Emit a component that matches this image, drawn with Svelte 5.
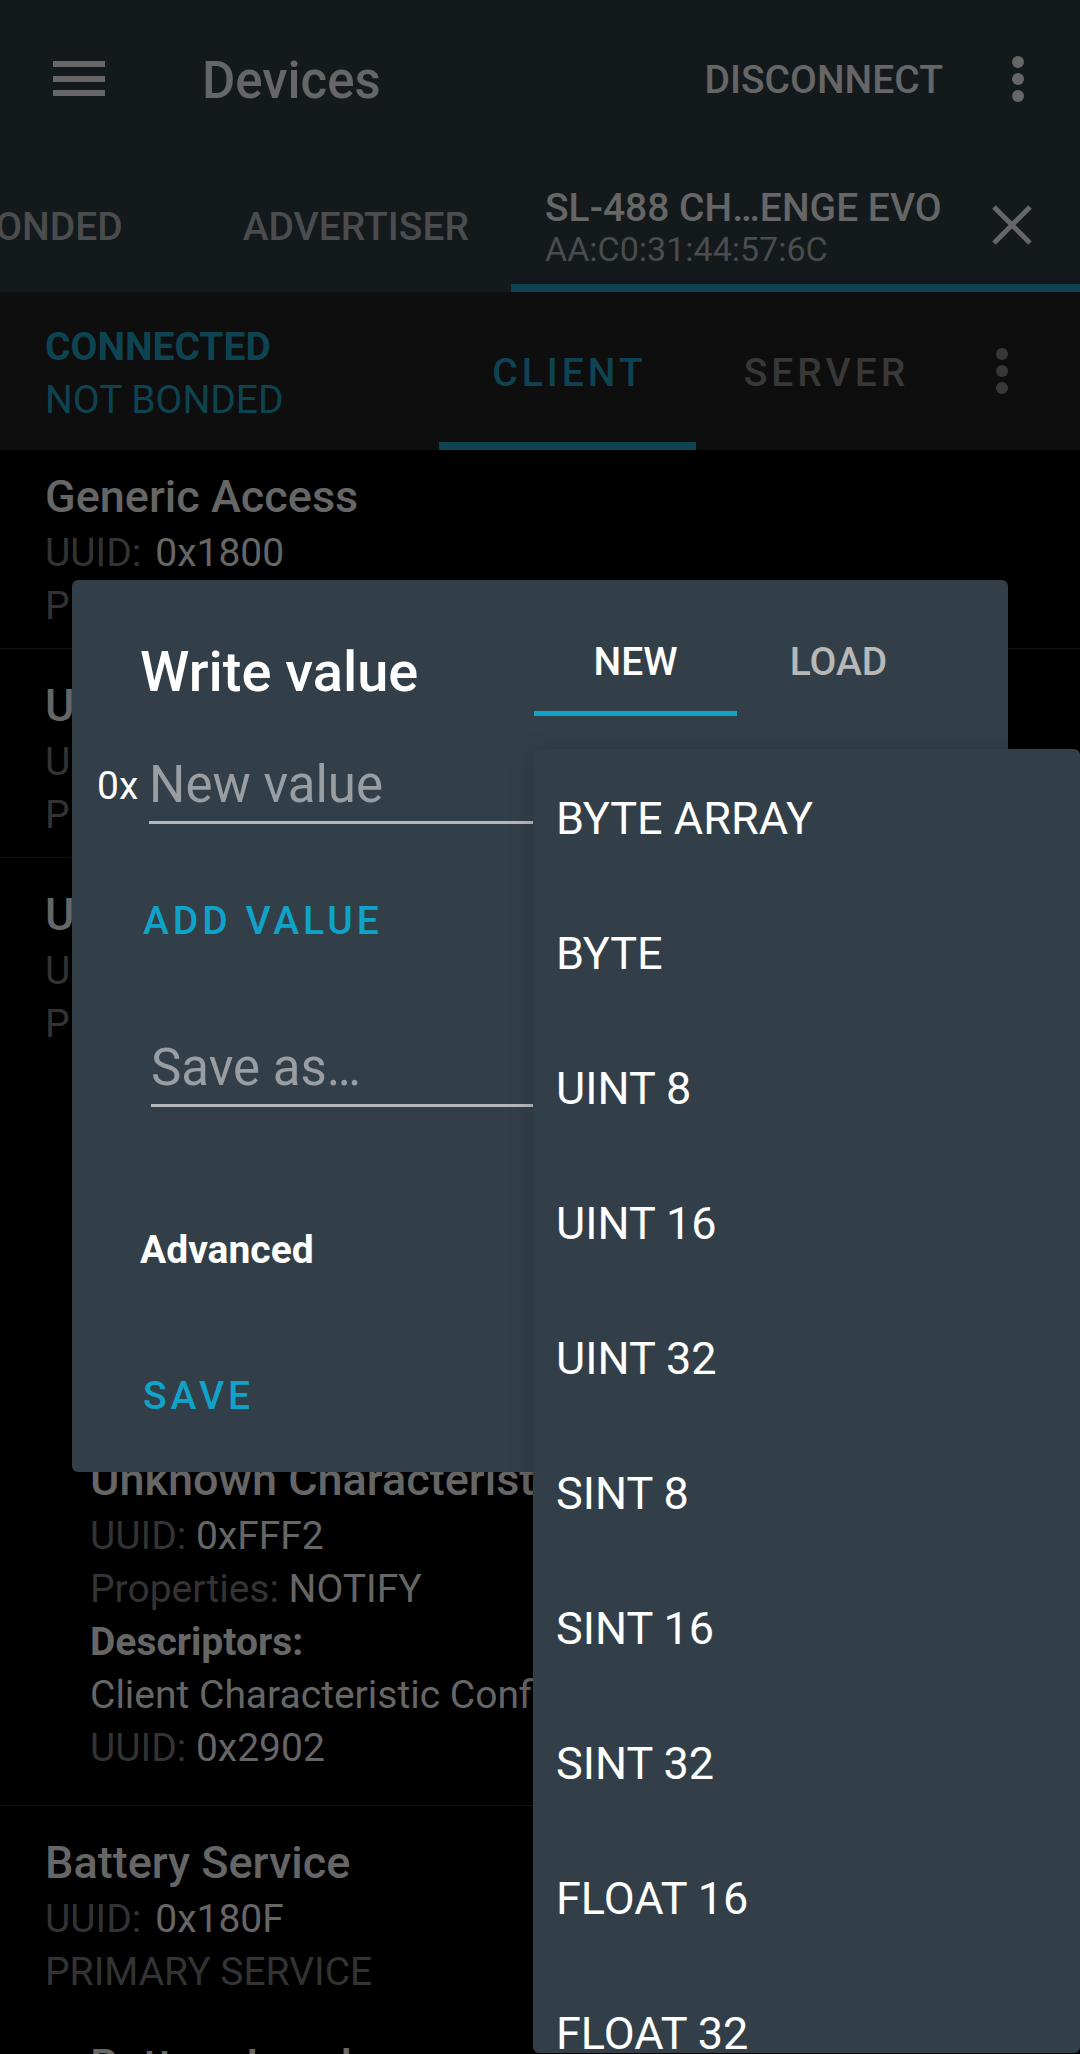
<script>
  const formats = [
    'BYTE ARRAY', 'BYTE', 'UINT 8', 'UINT 16', 'UINT 32',
    'SINT 8', 'SINT 16', 'SINT 32', 'FLOAT 16', 'FLOAT 32'
  ];

  const descriptor = { name: 'Client Characteristic Configuration', uuid: '0x2902' };

  const services = [
    { name: 'Generic Access', uuid: '0x1800', characteristics: [] },
    { name: 'Unknown Service', uuid: '0x1801', characteristics: [] },
    {
      name: 'Unknown Service',
      uuid: '0xFFF0',
      characteristics: [
        { name: 'Unknown Characteristic', uuid: '0xFFF1', properties: 'WRITE', descriptor },
        { name: 'Unknown Characteristic', uuid: '0xFFF2', properties: 'NOTIFY', descriptor }
      ]
    },
    {
      name: 'Battery Service',
      uuid: '0x180F',
      characteristics: [
        { name: 'Battery Level', uuid: '0x2A19', properties: 'READ', descriptor }
      ]
    }
  ];

  let newValue = $state('');
  let presetName = $state('');
</script>

{#snippet dots()}
  <svg class="dots" viewBox="0 0 12 48" aria-hidden="true">
    <circle cx="6" cy="7" r="6" />
    <circle cx="6" cy="24" r="6" />
    <circle cx="6" cy="41" r="6" />
  </svg>
{/snippet}

<div class="screen">
  <header>
    <div class="appbar">
      <button class="menu-button" aria-label="Open navigation">
        <svg viewBox="0 0 52 36" aria-hidden="true">
          <path d="M0 0h52v6H0zM0 15h52v6H0zM0 29h52v6H0z" />
        </svg>
      </button>
      <h1>Devices</h1>
      <button class="disconnect">DISCONNECT</button>
      <button class="more" aria-label="More options">{@render dots()}</button>
    </div>
    <nav class="tabs">
      <button class="tab">BONDED</button>
      <button class="tab">ADVERTISER</button>
      <div class="device-tab">
        <button class="device">
          <span class="device-name">SL-488 CH…ENGE EVO</span>
          <span class="device-address">AA:C0:31:44:57:6C</span>
        </button>
        <button class="close" aria-label="Close tab">
          <svg viewBox="0 0 40 40" aria-hidden="true"><path d="M2 2l36 36M38 2L2 38" /></svg>
        </button>
      </div>
    </nav>
  </header>

  <section class="statusbar">
    <div class="status">
      <strong>CONNECTED</strong>
      <span>NOT BONDED</span>
    </div>
    <button class="role active">CLIENT</button>
    <button class="role">SERVER</button>
    <button class="more small" aria-label="Connection options">{@render dots()}</button>
  </section>

  <main>
    <div class="services">
      {#each services as service}
        <article class="service">
          <h2>{service.name}</h2>
          <p class="uuid"><span class="dim">UUID:</span><span>{service.uuid}</span></p>
          <p class="dim">PRIMARY SERVICE</p>
          {#each service.characteristics as item}
            <div class="characteristic">
              <h3>{item.name}</h3>
              <p><span class="dim">UUID:</span> {item.uuid}</p>
              <p><span class="dim">Properties:</span> {item.properties}</p>
              <p><strong>Descriptors:</strong></p>
              <p>{item.descriptor.name}</p>
              <p><span class="dim">UUID:</span> {item.descriptor.uuid}</p>
            </div>
          {/each}
        </article>
      {/each}
    </div>
  </main>

  <div class="overlay">
    <form class="dialog" aria-labelledby="dialog-title" onsubmit={(e) => e.preventDefault()}>
      <div class="dialog-head">
        <h2 id="dialog-title">Write value</h2>
        <button type="button" class="dialog-tab active">NEW</button>
        <button type="button" class="dialog-tab">LOAD</button>
      </div>
      <div class="value-row">
        <label for="value">0x</label>
        <input id="value" type="text" placeholder="New value" bind:value={newValue} />
      </div>
      <button type="button" class="action">ADD VALUE</button>
      <input class="preset" type="text" aria-label="Save as" placeholder="Save as…" bind:value={presetName} />
      <button type="button" class="advanced">Advanced</button>
      <button type="submit" class="action">SAVE</button>
    </form>
    <ul class="formats">
      {#each formats as format}
        <li><button>{format}</button></li>
      {/each}
    </ul>
  </div>
</div>

<style>
  :global(body) {
    background: #000;
  }
  .screen {
    position: relative;
    display: flex;
    flex-direction: column;
    height: 100vh;
    overflow: hidden;
    background: #000;
    color: #666;
    font-family: Roboto, sans-serif;
    font-size: 39px;
    line-height: 53px;
  }
  h1, h2, h3, p, ul {
    margin: 0;
    padding: 0;
  }
  button {
    margin: 0;
    padding: 0;
    border: 0;
    background: none;
    color: inherit;
    font: inherit;
    text-align: left;
    white-space: nowrap;
  }
  svg {
    display: block;
    fill: currentColor;
  }
  header {
    flex: none;
    background: #14191c;
  }
  .appbar {
    display: flex;
    align-items: center;
    height: 157px;
    padding: 0 56px 0 53px;
  }
  .menu-button svg {
    width: 52px;
    height: 36px;
  }
  h1 {
    flex: 1;
    margin-left: 97px;
    padding-top: 4px;
    font-size: 51px;
    line-height: 60px;
    font-weight: 500;
  }
  .disconnect {
    margin-right: 69px;
    padding-top: 4px;
    font-weight: 500;
  }
  .dots {
    width: 12px;
    height: 48px;
  }
  .tabs {
    display: flex;
    justify-content: flex-end;
    height: 135px;
    overflow: hidden;
  }
  .tab {
    flex: none;
    padding: 6px 42px 0 78px;
    color: #4a4c4e;
    font-weight: 500;
  }
  .device-tab {
    flex: none;
    display: flex;
    align-items: center;
    justify-content: space-between;
    box-sizing: border-box;
    width: 569px;
    padding: 0 48px 0 34px;
    box-shadow: inset 0 -8px #0e4352;
  }
  .device {
    display: flex;
    flex-direction: column;
    padding-top: 4px;
  }
  .device-name {
    font-weight: 500;
    line-height: 44px;
  }
  .device-address {
    color: #4a4c4e;
    font-size: 34px;
    line-height: 38px;
  }
  .close svg {
    width: 40px;
    height: 40px;
    stroke: currentColor;
    stroke-width: 5;
  }
  .statusbar {
    flex: none;
    display: flex;
    height: 158px;
    background: #0e0e0e;
    padding-right: 30px;
  }
  .status {
    flex: 1;
    display: flex;
    flex-direction: column;
    justify-content: center;
    padding: 6px 0 0 45px;
    color: #0e4352;
  }
  .role {
    width: 257px;
    padding: 4px 0 0 4px;
    color: #383838;
    font-weight: 500;
    letter-spacing: 4px;
    text-align: center;
  }
  .role.active {
    color: #0e4352;
    box-shadow: inset 0 -8px #0e4352;
  }
  .small {
    display: grid;
    place-items: center;
    width: 97px;
    color: #383838;
  }
  main {
    flex: 1;
    min-height: 0;
    overflow: hidden;
  }
  .services {
    margin-top: -10px;
  }
  .service {
    padding: 26px 45px 15px;
    border-bottom: 1px solid #141414;
  }
  .service:has(.characteristic) {
    padding-bottom: 30px;
  }
  .service h2, .service h3 {
    font-size: 45px;
    line-height: 61px;
    font-weight: 500;
  }
  .uuid {
    display: flex;
    gap: 14px;
  }
  .dim {
    color: #333;
  }
  .characteristic {
    padding: 36px 0 0 45px;
  }
  .overlay {
    position: absolute;
    inset: 0;
    display: flex;
    align-items: center;
    padding: 0 72px 2px;
  }
  .dialog {
    flex: 1;
    display: flex;
    flex-direction: column;
    align-items: flex-start;
    box-sizing: border-box;
    padding: 26px 68px 49px;
    border-radius: 6px;
    background: #333f48;
    color: #fff;
  }
  .dialog-head {
    display: flex;
    align-items: flex-end;
    align-self: stretch;
  }
  .dialog-head h2 {
    flex: 1;
    padding-bottom: 11px;
    font-size: 56px;
    line-height: 66px;
    font-weight: 500;
  }
  .dialog-tab {
    width: 203px;
    height: 110px;
    padding-top: 2px;
    color: #b8b8b8;
    font-weight: 500;
    text-align: center;
  }
  .dialog-tab.active {
    color: #fff;
    box-shadow: inset 0 -5px #10a3c9;
  }
  .value-row {
    display: flex;
    align-items: flex-end;
    align-self: stretch;
    margin: 38px 0 71px -43px;
  }
  .value-row label {
    width: 52px;
    padding-bottom: 11px;
  }
  input {
    flex: 1;
    box-sizing: border-box;
    height: 70px;
    padding: 0 0 7px;
    border: 0;
    border-bottom: 3px solid #b6b9bc;
    border-radius: 0;
    outline: 0;
    background: none;
    color: #fff;
    font: inherit;
    font-size: 51px;
    line-height: 60px;
  }
  input::placeholder {
    color: #999ea3;
    opacity: 1;
  }
  .action {
    padding-left: 3px;
    color: #10a3c9;
    font-weight: 500;
    letter-spacing: 4px;
  }
  .preset {
    flex: none;
    align-self: stretch;
    margin: 89px 0 117px 11px;
  }
  .advanced {
    margin-bottom: 93px;
    font-weight: 700;
  }
  .formats {
    position: absolute;
    top: 749px;
    right: 0;
    bottom: 1px;
    width: 547px;
    overflow: hidden;
    border-radius: 6px;
    background: #333f48;
    box-shadow: 0 4px 24px rgba(0, 0, 0, 0.2);
    color: #fff;
    list-style: none;
  }
  .formats button {
    display: block;
    width: 100%;
    height: 135px;
    padding: 5px 23px 0;
    font-size: 45px;
    line-height: 54px;
  }
</style>
